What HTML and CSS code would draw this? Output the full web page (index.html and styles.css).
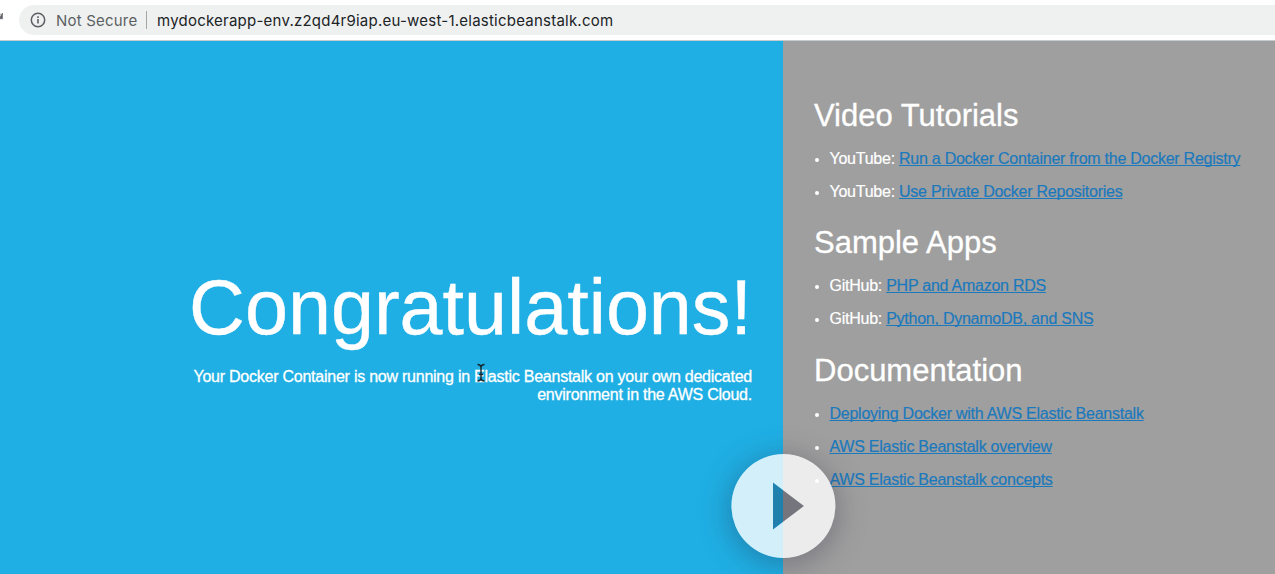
FILE: index.html
```
<!DOCTYPE html>
<html lang="en">
<head>
<meta charset="utf-8">
<title>Congratulations!</title>
<link rel="stylesheet" href="styles.css">
</head>
<body>
<header class="toolbar">
  <svg class="reload" width="4" height="12" viewBox="0 0 4 12"><path d="M0 1.5 1.2 3M2.5 1V6.8H-1Z" fill="#5f6368" stroke="#5f6368" stroke-width=".6"/></svg>
  <div class="address">
    <svg class="info" width="16" height="16" viewBox="0 0 16 16"><circle cx="8" cy="8" r="6.7" fill="none" stroke="#5c5f62" stroke-width="1.5"/><path d="M8 7.1v4.4M8 4.3v1.6" stroke="#5c5f62" stroke-width="1.6"/></svg>
    <span class="security">Not Secure</span>
    <span class="divider"></span>
    <span class="url">mydockerapp-env.z2qd4r9iap.eu-west-1.elasticbeanstalk.com</span>
  </div>
</header>
<main class="page">
  <section class="hero">
    <h1 class="title">Congratulations!</h1>
    <p class="subtitle">Your Docker Container is now running in Elastic Beanstalk on your own dedicated<br>environment in the AWS Cloud.</p>
  </section>
  <aside class="links">
    <h2 class="heading">Video Tutorials</h2>
    <ul class="list">
      <li class="item">YouTube: <a class="link" href="#">Run a Docker Container from the Docker Registry</a></li>
      <li class="item">YouTube: <a class="link" href="#">Use Private Docker Repositories</a></li>
    </ul>
    <h2 class="heading">Sample Apps</h2>
    <ul class="list">
      <li class="item">GitHub: <a class="link" href="#">PHP and Amazon RDS</a></li>
      <li class="item">GitHub: <a class="link" href="#">Python, DynamoDB, and SNS</a></li>
    </ul>
    <h2 class="heading">Documentation</h2>
    <ul class="list">
      <li class="item"><a class="link" href="#">Deploying Docker with AWS Elastic Beanstalk</a></li>
      <li class="item"><a class="link" href="#">AWS Elastic Beanstalk overview</a></li>
      <li class="item"><a class="link" href="#">AWS Elastic Beanstalk concepts</a></li>
    </ul>
  </aside>
</main>
<svg class="cursor" width="10" height="20" viewBox="0 0 10 20"><path d="M1.5 1.5Q4.5 1.5 5 4Q5.5 1.5 8.5 1.5M5 4V15.5M1.5 18Q4.5 18 5 15.5Q5.5 18 8.5 18M3 11.5H7" fill="none" stroke="#16262e" stroke-width="1.4"/></svg>
<svg class="play" width="200" height="168" viewBox="0 0 200 168">
  <defs>
    <filter id="soft" x="-80%" y="-80%" width="260%" height="260%" color-interpolation-filters="sRGB"><feGaussianBlur stdDeviation="15"/></filter>
    <mask id="around" maskUnits="userSpaceOnUse" x="0" y="0" width="200" height="200"><path fill="#fff" fill-rule="evenodd" d="M0 0H200V200H0ZM48.4 100a52 52 0 1 0 104 0a52 52 0 1 0-104 0ZM90 76.5 121 100 90 123.5Z"/></mask>
  </defs>
  <g mask="url(#around)"><circle cx="100" cy="105" r="54" fill="#20203c" fill-opacity=".33" filter="url(#soft)"/></g>
  <path fill="#fff" fill-opacity=".8" fill-rule="evenodd" d="M48.4 100a52 52 0 1 0 104 0a52 52 0 1 0-104 0ZM90 76.5 121 100 90 123.5Z"/>
</svg>
</body>
</html>
```
FILE: styles.css
```
* { box-sizing: border-box; }
body {
  margin: 0;
  height: 574px;
  overflow: hidden;
  display: flex;
  flex-direction: column;
  position: relative;
  font: 16px/18px "Liberation Sans", Arial, sans-serif;
  color: #fff;
}
.toolbar {
  height: 41px;
  flex: none;
  display: flex;
  align-items: flex-start;
  padding-top: 5px;
  background: #fff;
  border-bottom: 1px solid #c4ccd0;
}
.reload { width: 4px; margin: 7px 15px 0 0; flex: none; }
.address {
  flex: 1;
  height: 30px;
  display: flex;
  align-items: center;
  padding-left: 11px;
  background: #eff1f1;
  border-radius: 15px 0 0 15px;
  font-family: Inter, sans-serif;
  font-size: 15px;
  white-space: nowrap;
}
.info { margin-right: 10px; }
.security { color: #5c5f62; width: 82px; letter-spacing: .2px; }
.divider { width: 1px; height: 18px; margin: 0 10px 0 8px; background: #a2a5a7; }
.url { color: #202325; letter-spacing: .23px; }
.security, .url { padding-top: 1px; }
.page { flex: 1; display: grid; grid-template-columns: 783px 1fr; }
.hero {
  padding: 222px 31px 0 0;
  background: #1fafe4;
  text-align: right;
}
.title { margin: 0; font-size: 77.3px; font-weight: 400; line-height: 89px; -webkit-text-stroke: .4px #fff; }
.subtitle { margin: 16px 0 0; letter-spacing: -.24px; -webkit-text-stroke: .3px #fff; }
.links { padding: 56.6px 0 0 31px; background: #9f9f9f; }
.heading { margin: 0 0 16px; font-size: 31px; font-weight: 400; line-height: 36px; -webkit-text-stroke: .3px #fff; }
.list {
  margin: 0 0 24.4px;
  padding: 0 0 0 15.5px;
  display: flex;
  flex-direction: column;
  gap: 15.1px;
}
.item { white-space: nowrap; letter-spacing: -.25px; -webkit-text-stroke: .2px; }
.item::marker { font-size: 14px; }
.link { color: #1b79bd; text-decoration: underline; text-decoration-skip-ink: none; }
.cursor { position: absolute; left: 476px; top: 363px; }
.play { position: absolute; left: 683px; top: 406px; overflow: hidden; }
```
